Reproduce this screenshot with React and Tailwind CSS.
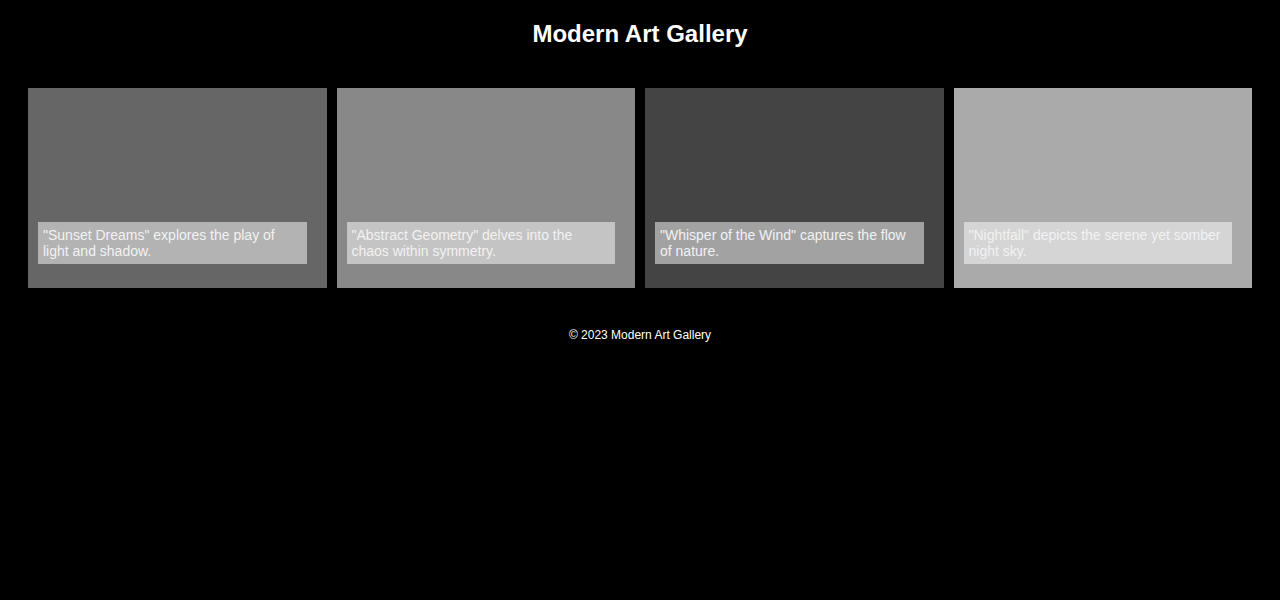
import React from 'react';

const artworks = [
  { bg: 'bg-[#666666]', text: '"Sunset Dreams" explores the play of light and shadow.' },
  { bg: 'bg-[#888888]', text: '"Abstract Geometry" delves into the chaos within symmetry.' },
  { bg: 'bg-[#444444]', text: '"Whisper of the Wind" captures the flow of nature.' },
  { bg: 'bg-[#aaaaaa]', text: '"Nightfall" depicts the serene yet somber night sky.' },
];

export default function App() {
  return (
    <div className="min-h-[600px] bg-black text-white font-['Liberation_Sans',Arial,sans-serif]">
      {/* Header */}
      <header className="pt-[20px] pb-[40px] text-center">
        <h1 className="text-[24px] leading-[28px] font-bold">Modern Art Gallery</h1>
      </header>

      {/* Gallery */}
      <main className="flex gap-[10px] px-[28px]">
        {artworks.map((art, i) => (
          <div key={i} className={`relative flex-1 h-[200px] ${art.bg}`}>
            <div className="absolute left-[10px] bottom-[24px] w-[90%] bg-white/50 px-[5px] py-[5px] text-[14px] leading-[16px] text-[#f2f2f2]">
              {art.text}
            </div>
          </div>
        ))}
      </main>

      {/* Footer */}
      <footer className="pt-[40px] text-center text-[12px] leading-[14px]">
        © 2023 Modern Art Gallery
      </footer>
    </div>
  );
}
